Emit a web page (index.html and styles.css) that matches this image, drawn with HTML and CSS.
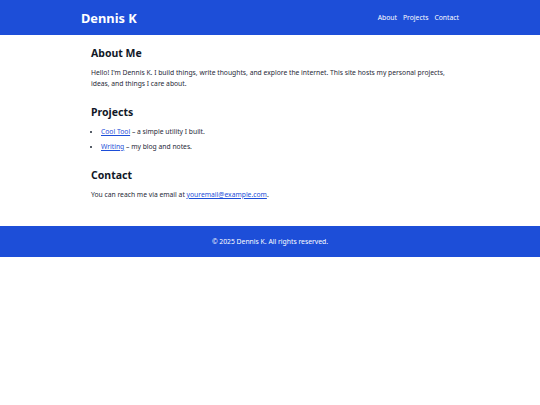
FILE: index.html
```html
<!DOCTYPE html>
<html lang="en">

<head>
    <meta charset="UTF-8">
    <meta name="viewport" content="width=device-width, initial-scale=1.0">
    <title>Dennis K</title>
    <link rel="stylesheet" href="styles.css">
</head>

<body>
    <header class="site-header">
        <div class="header-inner">
            <div class="brand">Dennis K</div>
            <nav class="nav">
                <a href="#about">About</a>
                <a href="#projects">Projects</a>
                <a href="#contact">Contact</a>
            </nav>
        </div>
    </header>

    <main class="content">
        <section id="about" class="section">
            <h2>About Me</h2>
            <p>Hello! I'm Dennis K. I build things, write thoughts, and explore the internet. This site hosts my personal projects, ideas, and things I care about.</p>
        </section>

        <section id="projects" class="section">
            <h2>Projects</h2>
            <ul class="project-list">
                <li><a href="#">Cool Tool</a> – a simple utility I built.</li>
                <li><a href="#">Writing</a> – my blog and notes.</li>
            </ul>
        </section>

        <section id="contact" class="section">
            <h2>Contact</h2>
            <p>You can reach me via email at <a href="#">youremail@example.com</a>.</p>
        </section>
    </main>

    <footer class="site-footer">
        © 2025 Dennis K. All rights reserved.
    </footer>
</body>

</html>
```

FILE: styles.css
```css
body {
    margin: 0;
    padding: 0;
    font-family: "Noto Sans", sans-serif;
    color: #1f2937;
    background-color: #ffffff;
}

.site-header {
    background-color: #1d4ed8;
    color: white;
    height: 35px;
}

.header-inner {
    max-width: 378px;
    margin: 0 auto;
    height: 100%;
    display: flex;
    justify-content: space-between;
    align-items: center;
}

.brand {
    font-size: 12.8px;
    font-weight: 700;
}

.nav {
    display: flex;
    gap: 6px;
}

.nav a {
    color: white;
    text-decoration: none;
    font-size: 6.8px;
}

.content {
    max-width: 358px;
    margin: 0 auto;
    padding: 11px 0 10px;
}

.section {
    margin-bottom: 16px;
}

h2 {
    font-size: 10.5px;
    line-height: 14px;
    font-weight: 700;
    color: #111827;
    margin: 0 0 7px;
}

p {
    font-size: 6.75px;
    line-height: 11px;
    margin: 0;
}

.project-list {
    font-size: 6.75px;
    margin: 6px 0 0;
    padding-left: 10px;
}

.project-list li {
    line-height: 11px;
    margin-bottom: 3.5px;
}

a {
    color: #1d4ed8;
}

.site-footer {
    background-color: #1d4ed8;
    color: white;
    text-align: center;
    font-size: 6.8px;
    height: 31px;
    line-height: 31px;
}
```
